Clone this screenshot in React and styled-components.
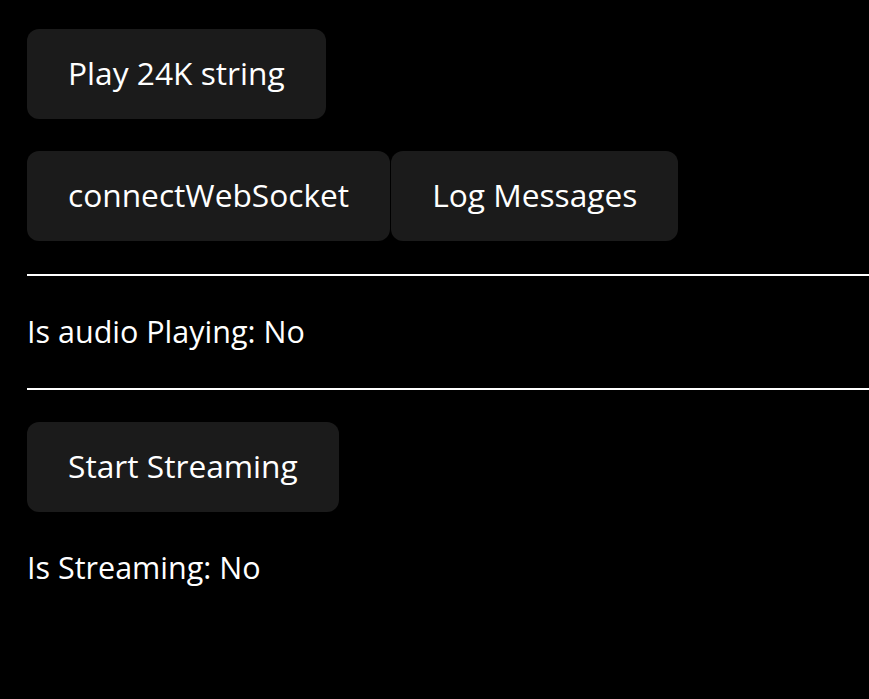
import React, { useState } from "react"
import styled, { createGlobalStyle } from "styled-components"

const GlobalStyle = createGlobalStyle`
  html, body {
    margin: 0;
    padding: 0;
    background: #000;
  }
  body {
    font-family: "Open Sans", "Noto Sans", sans-serif;
    color: #fff;
  }
`

const Page = styled.main`
  display: flex;
  flex-direction: column;
  align-items: flex-start;
  padding: 29px 0 0 27px;
  min-height: 100vh;
  box-sizing: border-box;
  background: #000;
`

const Row = styled.div`
  display: flex;
  gap: 1px;
  margin-top: ${props => props.$top || 0}px;
`

const Button = styled.button`
  box-sizing: border-box;
  height: 90px;
  padding: 0 41px 3px;
  border: none;
  border-radius: 12px;
  background: #1b1b1b;
  color: #fff;
  font-family: "Open Sans", "Noto Sans", sans-serif;
  font-size: 31.7px;
  white-space: nowrap;
  cursor: pointer;
  margin-top: ${props => props.$top || 0}px;
`

const Divider = styled.div`
  align-self: stretch;
  height: 2px;
  background: #fff;
  margin-top: ${props => props.$top || 0}px;
`

const Status = styled.p`
  margin: 32px 0 0;
  padding-bottom: 2px;
  height: 46px;
  font-size: 30.5px;
  line-height: 46px;
`

const App = () => {
  const [playing, setPlaying] = useState(false)
  const [streaming, setStreaming] = useState(false)

  return (
    <>
      <GlobalStyle />
      <Page>
        <Button onClick={() => setPlaying(!playing)}>Play 24K string</Button>
        <Row $top={32}>
          <Button>connectWebSocket</Button>
          <Button>Log Messages</Button>
        </Row>
        <Divider $top={33} />
        <Status>Is audio Playing: {playing ? "Yes" : "No"}</Status>
        <Divider $top={32} />
        <Button $top={32} onClick={() => setStreaming(!streaming)}>
          Start Streaming
        </Button>
        <Status>Is Streaming: {streaming ? "Yes" : "No"}</Status>
      </Page>
    </>
  )
}

export default App
